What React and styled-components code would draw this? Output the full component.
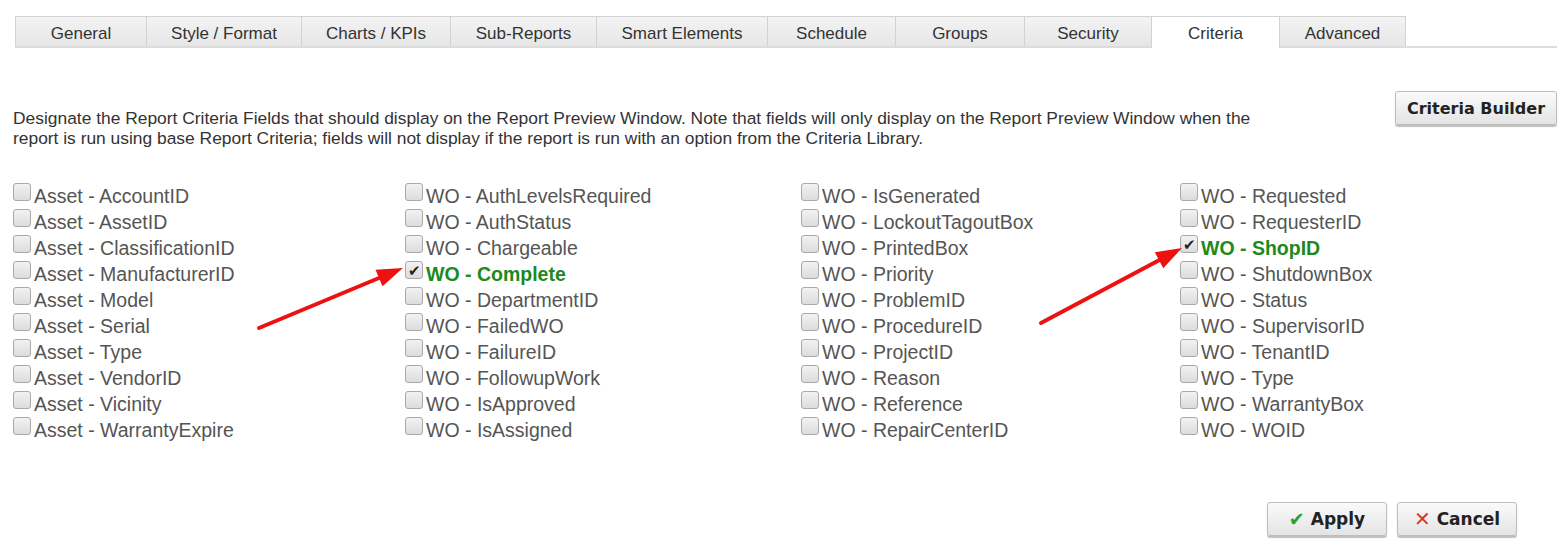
import React from 'react';
import styled, { createGlobalStyle } from 'styled-components';

const GlobalStyle = createGlobalStyle`
  body {
    margin: 0;
    background: #fff;
    font-family: "Liberation Sans", Arial, sans-serif;
  }
`;

const Page = styled.div`
  position: relative;
  width: 1560px;
  height: 545px;
  overflow: hidden;
`;

const TabBar = styled.div`
  display: flex;
  margin: 16px 3px 0 15px;
  border-bottom: 2px solid #dcdcdc;
`;

const Tab = styled.div`
  width: ${p => p.$w}px;
  box-sizing: border-box;
  display: flex;
  align-items: center;
  justify-content: center;
  font-size: 17px;
  color: #333;
  border: 1px solid #d2d2d2;
  border-bottom: none;
  margin-right: -1px;
  background: ${p => (p.$active ? '#fff' : 'linear-gradient(#f3f3f3, #e6e6e6)')};
  margin-bottom: ${p => (p.$active ? '-2px' : '0')};
  height: ${p => (p.$active ? '32px' : '30px')};
  padding-top: ${p => (p.$active ? '4px' : '5px')};
  padding-bottom: ${p => (p.$active ? '2px' : '0')};
`;

const TopRow = styled.div`
  display: flex;
  justify-content: space-between;
  align-items: flex-start;
  margin: 43px 3px 0 13px;
`;

const Description = styled.p`
  margin: 17px 0 0;
  width: 1250px;
  font-size: 17.4px;
  line-height: 20px;
  color: #333;
`;

const Button = styled.button`
  height: 34px;
  box-sizing: border-box;
  padding: 0 6px;
  display: inline-flex;
  align-items: center;
  justify-content: center;
  gap: 6px;
  white-space: nowrap;
  font-family: "DejaVu Sans", Verdana, sans-serif;
  font-weight: bold;
  font-size: ${p => p.$fs || 16}px;
  color: #222;
  border: 1px solid #bdbdbd;
  border-radius: 3px;
  background: linear-gradient(#fafafa, #e4e4e4);
  box-shadow: 0 2px 1px rgba(0, 0, 0, 0.25);
  width: ${p => (p.$w ? `${p.$w}px` : 'auto')};
`;

const Glyph = styled.span`
  color: ${p => p.$color};
  font-size: ${p => p.$size}px;
  font-weight: normal;
`;

const Grid = styled.div`
  display: grid;
  grid-template-columns: 392px 396px 379px 1fr;
  margin: 35px 0 0 13px;
`;

const Column = styled.div`
  display: flex;
  flex-direction: column;
`;

const Field = styled.label`
  display: flex;
  align-items: center;
  height: 26px;
  font-size: 19.5px;
  color: ${p => (p.$checked ? '#1c8a1c' : '#555')};
  font-weight: ${p => (p.$checked ? 'bold' : 'normal')};
  white-space: nowrap;
`;

const Box = styled.span`
  width: 18px;
  height: 18px;
  box-sizing: border-box;
  margin: -8px 3px 0 0;
  border: 1px solid #a9a9a9;
  border-radius: 3px;
  background: linear-gradient(#f2f2f2, #dcdcdc);
  display: flex;
  align-items: center;
  justify-content: center;
  font-size: 15px;
  color: #222;
  font-weight: normal;
  line-height: 1;
`;

const Footer = styled.div`
  display: flex;
  justify-content: flex-end;
  gap: 10px;
  margin: 59px 43px 0 0;
`;

const Overlay = styled.svg`
  position: absolute;
  left: 0;
  top: 0;
  pointer-events: none;
`;

const tabs = [
  ['General', 132], ['Style / Format', 156], ['Charts / KPIs', 150], ['Sub-Reports', 147],
  ['Smart Elements', 172], ['Schedule', 129], ['Groups', 130], ['Security', 128],
  ['Criteria', 129], ['Advanced', 127],
];

const columns = [
  ['Asset - AccountID', 'Asset - AssetID', 'Asset - ClassificationID', 'Asset - ManufacturerID', 'Asset - Model',
    'Asset - Serial', 'Asset - Type', 'Asset - VendorID', 'Asset - Vicinity', 'Asset - WarrantyExpire'],
  ['WO - AuthLevelsRequired', 'WO - AuthStatus', 'WO - Chargeable', 'WO - Complete', 'WO - DepartmentID',
    'WO - FailedWO', 'WO - FailureID', 'WO - FollowupWork', 'WO - IsApproved', 'WO - IsAssigned'],
  ['WO - IsGenerated', 'WO - LockoutTagoutBox', 'WO - PrintedBox', 'WO - Priority', 'WO - ProblemID',
    'WO - ProcedureID', 'WO - ProjectID', 'WO - Reason', 'WO - Reference', 'WO - RepairCenterID'],
  ['WO - Requested', 'WO - RequesterID', 'WO - ShopID', 'WO - ShutdownBox', 'WO - Status',
    'WO - SupervisorID', 'WO - TenantID', 'WO - Type', 'WO - WarrantyBox', 'WO - WOID'],
];

const checked = ['WO - Complete', 'WO - ShopID'];

function Arrow({ x1, y1, x2, y2 }) {
  const a = Math.atan2(y2 - y1, x2 - x1);
  const len = 26, half = 9;
  const bx = x2 - len * Math.cos(a), by = y2 - len * Math.sin(a);
  const px = -Math.sin(a) * half, py = Math.cos(a) * half;
  return (
    <g>
      <line x1={x1} y1={y1} x2={bx} y2={by} stroke="#ee1111" strokeWidth="4" strokeLinecap="round" />
      <polygon points={`${x2},${y2} ${bx + px},${by + py} ${bx - px},${by - py}`} fill="#ee1111" />
    </g>
  );
}

export default function App() {
  return (
    <Page>
      <GlobalStyle />
      <TabBar>
        {tabs.map(([t, w]) => (
          <Tab key={t} $w={w} $active={t === 'Criteria'}>{t}</Tab>
        ))}
      </TabBar>
      <TopRow>
        <Description>
          Designate the Report Criteria Fields that should display on the Report Preview Window. Note that fields will only display on the Report Preview Window when the report is run using base Report Criteria; fields will not display if the report is run with an option from the Criteria Library.
        </Description>
        <Button $w={162}>Criteria Builder</Button>
      </TopRow>
      <Grid>
        {columns.map((col, i) => (
          <Column key={i}>
            {col.map(f => {
              const on = checked.includes(f);
              return (
                <Field key={f} $checked={on}>
                  <Box>{on ? '✔' : ''}</Box>
                  {f}
                </Field>
              );
            })}
          </Column>
        ))}
      </Grid>
      <Footer>
        <Button $w={120} $fs={17}><Glyph $color="#2e9e2e" $size={19}>✔</Glyph>Apply</Button>
        <Button $w={120} $fs={17}><Glyph $color="#e53030" $size={20}>✕</Glyph>Cancel</Button>
      </Footer>
      <Overlay width="1560" height="545">
        <Arrow x1={259} y1={328} x2={403} y2={268} />
        <Arrow x1={1041} y1={323} x2={1182} y2={248} />
      </Overlay>
    </Page>
  );
}
